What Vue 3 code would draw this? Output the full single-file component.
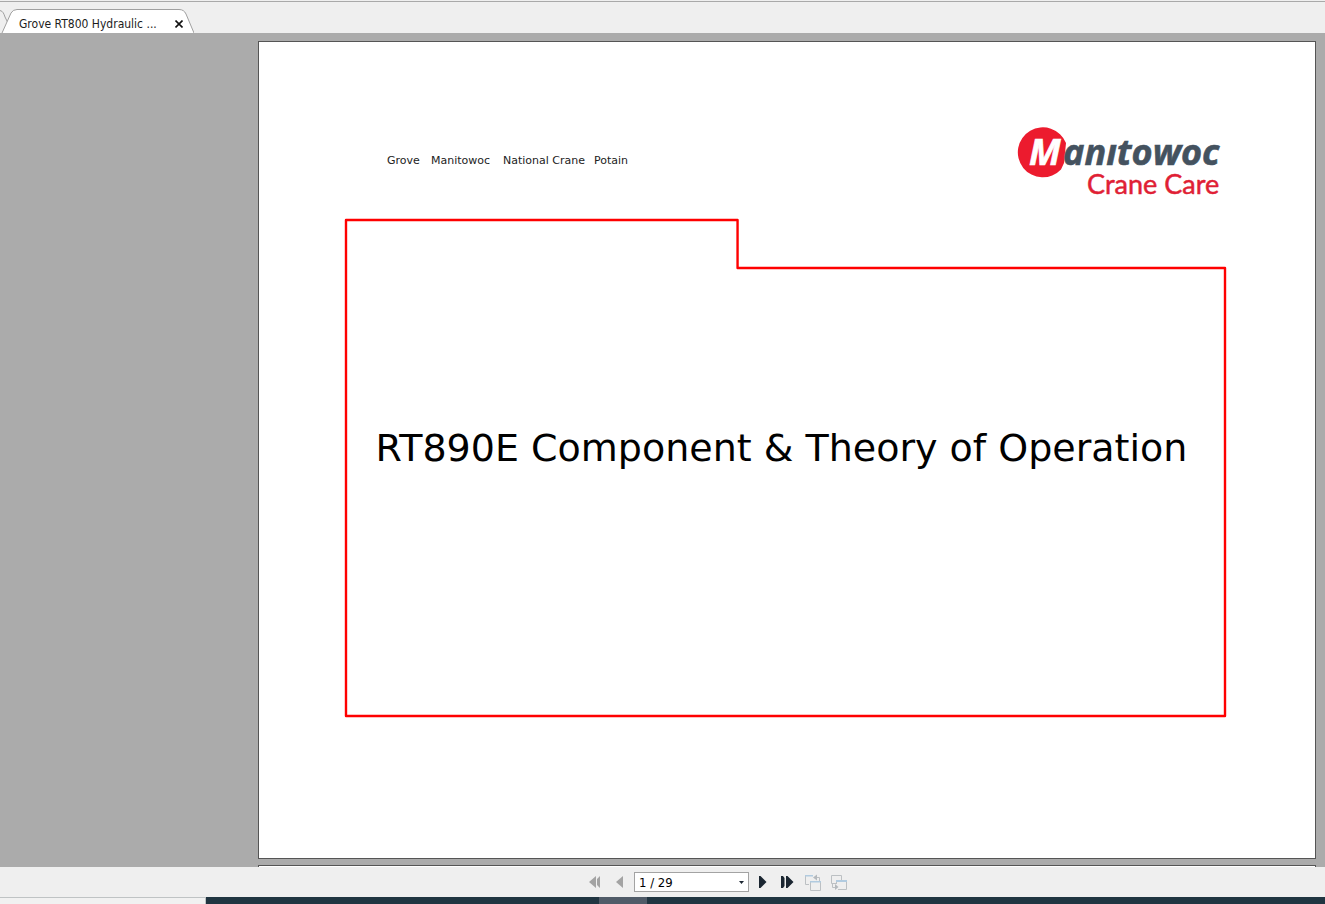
<template>
  <div class="reader">
    <header class="tab-bar">
      <svg class="tab-previous" viewBox="0 0 9 24" aria-hidden="true">
        <path d="M0 1.5 C3 2 4 5 5 8 L8 14" />
      </svg>
      <div class="tab">
        <svg class="tab-shape" viewBox="0 0 194 24" preserveAspectRatio="none" aria-hidden="true">
          <path d="M2 24 L11 4 Q13 .5 17 .5 H179 Q184 .5 186 5 L194 24" />
        </svg>
        <button class="tab-title" type="button">Grove RT800 Hydraulic ...</button>
        <button class="tab-close" type="button" aria-label="Close tab">
          <svg viewBox="0 0 8 8"><path d="M.5 .5 L7.5 7.5 M7.5 .5 L.5 7.5" /></svg>
        </button>
      </div>
    </header>

    <main class="viewer">
      <article class="page">
        <div class="page-header">
          <ul class="brands">
            <li v-for="brand in brands" :key="brand">{{ brand }}</li>
          </ul>
          <svg class="logo" viewBox="0 0 206 72" role="img" aria-label="Manitowoc Crane Care">
            <path d="M49 17 A25 25 0 1 0 44 43.500 L47 37 Z" fill="#ec1b2e" />
            <text class="logo-initial" x="12" y="39">M</text>
            <text class="logo-name" x="46" y="39">anıtowoc</text>
            <text class="logo-division" x="70" y="68">Crane Care</text>
          </svg>
        </div>

        <section class="folder">
          <svg class="folder-outline" viewBox="0 0 882 498" preserveAspectRatio="none" aria-hidden="true">
            <path d="M1 1 H393 V49 H881 V497 H1 Z" />
          </svg>
          <h1 class="title">RT890E Component &amp; Theory of Operation</h1>
        </section>
      </article>
      <div class="page-next"></div>
    </main>

    <nav class="toolbar">
      <button type="button" aria-label="First page" disabled>
        <svg width="12" height="12" viewBox="0 0 12 12"><path d="M7 0 V12 L0 6 Z M11 0 V12 L8 9 V3 Z" /></svg>
      </button>
      <button type="button" aria-label="Previous page" disabled>
        <svg width="8" height="12" viewBox="0 0 8 12"><path d="M7 0 V12 L0 6 Z" /></svg>
      </button>
      <div class="page-select">
        <select v-model="current" aria-label="Page">
          <option v-for="n in total" :key="n" :value="n">{{ n }} / {{ total }}</option>
        </select>
        <svg viewBox="0 0 5 3" aria-hidden="true"><path d="M0 0 H5 L2.5 3 Z" /></svg>
      </div>
      <button type="button" aria-label="Next page">
        <svg width="8" height="12" viewBox="0 0 8 12"><path d="M0 0 H1.500 L7.500 6 L1.500 12 H0 Z" /></svg>
      </button>
      <button type="button" aria-label="Last page">
        <svg width="13" height="12" viewBox="0 0 13 12"><path d="M0 0 H2 L3.500 2 V10 L2 12 H0 Z M5 0 H6.500 L12.500 6 L6.500 12 H5 Z" /></svg>
      </button>
      <button type="button" class="view" aria-label="Previous view" disabled>
        <svg width="17" height="17" viewBox="0 0 17 17">
          <path class="line" d="M4 10.500 H.5 V1.500 H8 M5.500 7.500 H15.500 V16.500 H5.500 Z M14.500 7 V3.500 H9" />
          <path class="arrow" d="M8 3.500 L12 .5 V6.500 Z" />
          <path class="accent" d="M0 1 H8 V2.500 H0 Z M5 7 H16 V8.500 H5 Z" />
        </svg>
      </button>
      <button type="button" class="view" aria-label="Next view" disabled>
        <svg width="17" height="17" viewBox="0 0 17 17">
          <path class="line" d="M5 9.500 H.5 V1.500 H10.500 V6 M5.500 10 V6.500 H15.500 V15.500 H7 M1.500 10 V13.500 H5" />
          <path class="arrow" d="M7.500 13 L4 10 V16 Z" />
          <path class="accent" d="M5 6 H16 V8 H5 Z" />
        </svg>
      </button>
    </nav>

    <footer class="taskbar">
      <div class="taskbar-search"></div>
      <div class="taskbar-active"></div>
    </footer>
  </div>
</template>

<script setup>
import { ref } from 'vue'

const brands = ['Grove', 'Manitowoc', 'National Crane', 'Potain']
const current = ref(1)
const total = 29
</script>

<style>
body {
  margin: 0;
}
</style>

<style scoped>
.reader {
  display: flex;
  flex-direction: column;
  height: 100vh;
  overflow: hidden;
  background: #efefef;
  font-family: "DejaVu Sans Condensed", "DejaVu Sans", sans-serif;
  font-size: 12px;
}

button {
  padding: 0;
  border: 0;
  background: none;
  font: inherit;
  color: inherit;
}

svg {
  display: block;
}

/* Tabs */
.tab-bar {
  position: relative;
  flex: none;
  height: 32px;
  margin-top: 1px;
  box-sizing: border-box;
  border-top: 1px solid #a9a9a9;
  display: flex;
  align-items: flex-end;
}

.tab-previous {
  position: absolute;
  left: 0;
  bottom: 0;
  width: 9px;
  height: 24px;
  fill: none;
  stroke: #a0a0a0;
}

.tab {
  position: relative;
  display: flex;
  align-items: center;
  gap: 16px;
  width: 194px;
  height: 24px;
  padding: 5px 11px 0 19px;
  box-sizing: border-box;
}

.tab-shape {
  position: absolute;
  inset: 0;
  width: 100%;
  height: 100%;
  fill: #fff;
  stroke: #a0a0a0;
}

.tab-title {
  position: relative;
  flex: 1;
  text-align: left;
  white-space: nowrap;
  font-family: "DejaVu Sans Condensed", "DejaVu Sans", sans-serif;
  color: #1c1c1c;
}

.tab-close {
  position: relative;
}

.tab-close svg {
  width: 8px;
  height: 8px;
  stroke: #111;
  stroke-width: 1.6;
}

/* Document */
.viewer {
  flex: 1;
  min-height: 0;
  display: flex;
  flex-direction: column;
  gap: 6px;
  padding: 8px 9px 0 258px;
  background: #ababab;
}

.page {
  flex: 1;
  display: flex;
  flex-direction: column;
  padding: 84px 89px 141px 86px;
  border: 1px solid #555;
  background: #fff;
}

.page-next {
  height: 1px;
  border: 1px solid #555;
  border-bottom: 0;
  background: #fff;
}

.page-header {
  display: flex;
  justify-content: space-between;
  align-items: center;
  height: 72px;
  margin-bottom: 21px;
  padding: 0 3px 0 42px;
}

/* Tab stops of the letterhead line */
.brands {
  display: grid;
  grid-template-columns: 44px 72px 91px auto;
  margin: 0;
  padding: 0 0 4px;
  list-style: none;
  font-family: "DejaVu Sans", sans-serif;
  font-size: 11px;
  white-space: nowrap;
  color: #222;
}

.logo {
  width: 206px;
  height: 72px;
  overflow: visible;
}

.logo-initial,
.logo-name {
  font: italic 700 36px "Open Sans", "Noto Sans", sans-serif;
  fill: #44525f;
  stroke: #44525f;
  stroke-width: 0.6;
}

.logo-initial {
  fill: #fff;
  stroke: #fff;
}

.logo-division {
  font: 400 27px Lato, "Noto Sans", sans-serif;
  fill: #e01f35;
  stroke: #e01f35;
  stroke-width: 0.5;
}

.folder {
  position: relative;
  flex: 1;
  display: flex;
  align-items: center;
  justify-content: center;
}

.folder-outline {
  position: absolute;
  inset: 0;
  width: 100%;
  height: 100%;
  overflow: visible;
  fill: none;
  stroke: #f00;
  stroke-width: 2.4;
  stroke-linejoin: round;
}

.title {
  margin: 0;
  padding: 0 8px 40px 0;
  font-family: "DejaVu Sans", sans-serif;
  font-size: 38px;
  font-weight: 400;
  line-height: 48px;
  white-space: nowrap;
  color: #000;
}

/* Page navigation */
.toolbar {
  flex: none;
  display: flex;
  align-items: center;
  justify-content: center;
  height: 30px;
  padding: 0 0 0 109px;
  box-sizing: border-box;
  fill: #1b2631;
}

.toolbar button {
  display: flex;
  justify-content: center;
  width: 25px;
}

.toolbar .view {
  width: 26px;
}

.toolbar button:disabled {
  fill: #a3a3a3;
}

.page-select {
  position: relative;
  margin: 0 1px 0 2px;
}

.page-select select {
  display: block;
  width: 115px;
  height: 20px;
  padding: 0 4px;
  border: 1px solid #a3a3a3;
  border-radius: 0;
  background: #fff;
  appearance: none;
  font-family: "DejaVu Sans Condensed", "DejaVu Sans", sans-serif;
  font-size: 13px;
  color: #000;
}

.page-select svg {
  position: absolute;
  top: 9px;
  right: 5px;
  width: 5px;
  height: 3px;
  pointer-events: none;
}

.toolbar .line {
  fill: none;
  stroke: #bcc0c3;
}

.toolbar .arrow {
  fill: #b4b9bd;
}

.toolbar .accent {
  fill: #b1cbe0;
}

/* Taskbar */
.taskbar {
  flex: none;
  display: flex;
  height: 7px;
  background: #203541;
}

.taskbar-search {
  width: 205px;
  border-top: 1px solid #bfc3c4;
  border-right: 1px solid #bfc3c4;
  background: #f1f1f1;
}

.taskbar-active {
  width: 48px;
  margin-left: 393px;
  background: #505b68;
}
</style>
